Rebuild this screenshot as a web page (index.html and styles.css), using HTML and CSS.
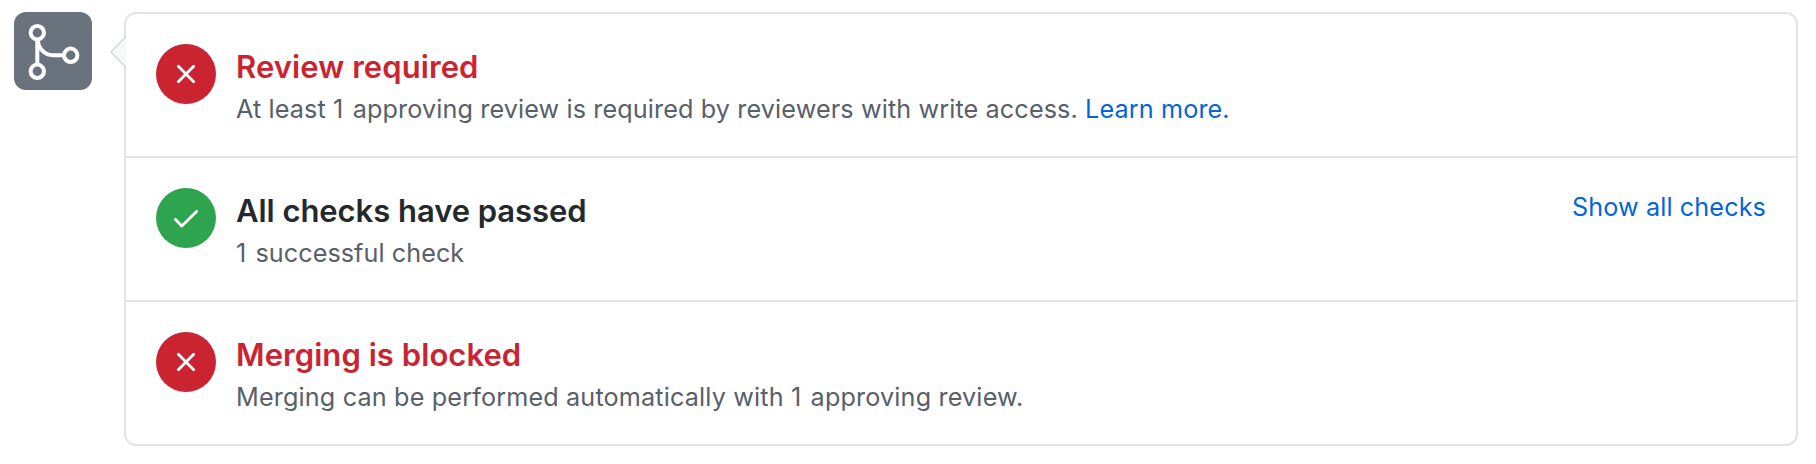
FILE: index.html
```html
<!DOCTYPE html>
<html lang="en">
<head>
<meta charset="utf-8">
<title>Merge status</title>
<link rel="stylesheet" href="styles.css">
</head>
<body>
<main class="merge">
  <div class="badge">
    <svg class="badge-icon" viewBox="0 0 78 78" aria-hidden="true">
      <path d="M23.3 27v26M23.800 27c0 9.500 7 16.300 15.200 16.300H50"/>
      <circle cx="23.300" cy="20.700" r="6.700"/>
      <circle cx="23.300" cy="59.300" r="6.700"/>
      <circle cx="56.700" cy="43.300" r="6.700"/>
    </svg>
  </div>
  <section class="panel">
    <svg class="caret" viewBox="0 0 16 32" aria-hidden="true">
      <path class="caret-fill" d="M16 .6.9 16 16 31.400z"/>
      <path class="caret-line" d="M16 .6.9 16 16 31.400"/>
    </svg>
    <div class="row">
      <div class="status status-fail">
        <svg class="status-icon" viewBox="0 0 60 60" aria-hidden="true"><path d="M22.300 22.300l15.400 15.400M37.700 22.300l-15.400 15.400"/></svg>
      </div>
      <div class="content">
        <h3 class="title title-review">Review required</h3>
        <p class="text text-review">At least <span class="count">1</span> approving review is required by reviewers with write access. <a class="link">Learn more.</a></p>
      </div>
    </div>
    <div class="row">
      <div class="status status-pass">
        <svg class="status-icon" viewBox="0 0 60 60" aria-hidden="true"><path d="M19.300 31.200l6.500 6.800 15-14.800"/></svg>
      </div>
      <div class="content">
        <h3 class="title title-checks">All checks have passed</h3>
        <p class="text text-checks"><span class="count">1</span> successful check</p>
      </div>
      <a class="link toggle">Show all checks</a>
    </div>
    <div class="row">
      <div class="status status-fail">
        <svg class="status-icon" viewBox="0 0 60 60" aria-hidden="true"><path d="M22.300 22.300l15.400 15.400M37.700 22.300l-15.400 15.400"/></svg>
      </div>
      <div class="content">
        <h3 class="title title-blocked">Merging is blocked</h3>
        <p class="text text-blocked">Merging can be performed automatically with <span class="count">1</span> approving review.</p>
      </div>
    </div>
  </section>
</main>
</body>
</html>
```
FILE: styles.css
```css
* { box-sizing: border-box; }
body {
  margin: 0;
  background: #fff;
  color: #24292e;
  font-family: Inter, "Liberation Sans", sans-serif;
}
.merge {
  display: flex;
  align-items: flex-start;
  gap: 32px;
  height: 464px;
  padding: 12px 18px 18px 14px;
}
.badge {
  flex: none;
  width: 78px;
  height: 78px;
  border-radius: 12px;
  background: #6a737d;
}
.badge-icon {
  display: block;
  fill: none;
  stroke: #fff;
  stroke-width: 4;
}
.panel {
  position: relative;
  flex: 1;
  border: 2px solid #e1e4e8;
  border-radius: 12px;
}
.caret {
  position: absolute;
  top: 22px;
  left: -16px;
  width: 16px;
  height: 32px;
}
.caret-fill { fill: #f6f8fa; }
.caret-line {
  fill: none;
  stroke: #d1d5da;
  stroke-width: 1.3;
}
.row {
  display: flex;
  gap: 20px;
  height: 142px;
  padding: 30px;
}
.row + .row {
  height: 144px;
  border-top: 2px solid #e1e4e8;
}
.status {
  flex: none;
  width: 60px;
  height: 60px;
  border-radius: 50%;
}
.status-fail { background: #cb2431; }
.status-pass { background: #2ea44f; }
.status-fail + .content .title { color: #cb2431; }
.status-icon {
  display: block;
  fill: none;
  stroke: #fff;
  stroke-width: 2.8;
  stroke-linecap: round;
  stroke-linejoin: round;
}
.content { flex: 1; }
.title {
  margin: 0;
  padding-top: 2px;
  font-size: 31px;
  font-weight: 600;
  line-height: 42px;
  white-space: nowrap;
}
.title-review { letter-spacing: .08px; }
.title-checks { letter-spacing: -.05px; }
.title-blocked { letter-spacing: .06px; }
.text {
  margin: 0;
  color: #586069;
  font-size: 25.2px;
  line-height: 42px;
  white-space: nowrap;
}
.text-review { letter-spacing: .12px; }
.text-checks { letter-spacing: .06px; }
.text-blocked { letter-spacing: .155px; }
.count { margin-right: 2px; }
.link { color: #0366d6; }
.toggle {
  font-size: 25.2px;
  line-height: 38px;
  letter-spacing: .11px;
}
```
